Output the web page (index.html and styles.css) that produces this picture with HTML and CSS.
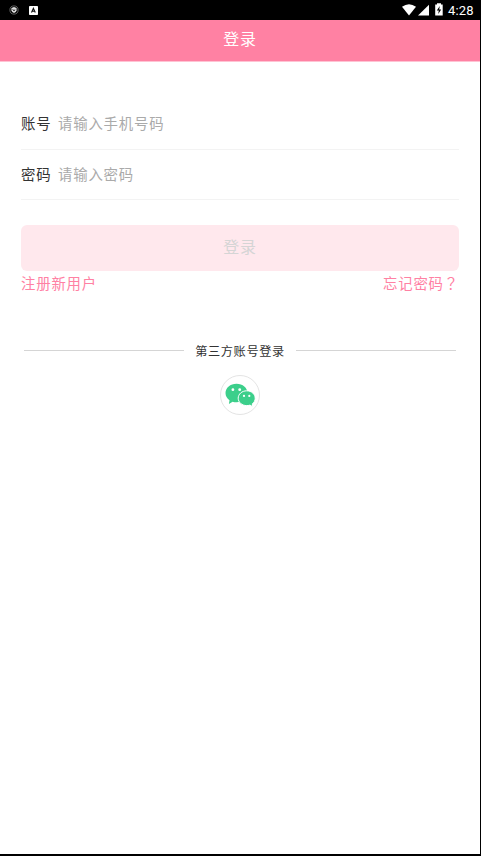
FILE: index.html
```html
<!DOCTYPE html>
<html lang="zh-CN">
<head>
<meta charset="utf-8">
<title>登录</title>
<link rel="stylesheet" href="styles.css">
</head>
<body>
<div class="screen">
  <div class="status">
    <svg class="shield" viewBox="0 0 10 10"><circle cx="5" cy="5" r="4.1" fill="none" stroke="#777" stroke-width=".8"/><path d="M2.4 3 5 2.1 7.6 3v2.4Q7.2 7.2 5 8 2.8 7.2 2.4 5.4z" fill="#ddd"/><path d="M3.7 4.2 5 6l.9-1.5" fill="none" stroke="#222" stroke-width=".9"/></svg>
    <svg class="app" viewBox="0 0 9 9"><rect width="9" height="9" rx=".8" fill="#fff"/><path d="M2.5 6.6 4.4 2.4 6.3 6.6M3.2 5.3h2.4" fill="none" stroke="#111" stroke-width="1.1"/></svg>
    <svg class="signals" viewBox="0 0 42 14"><path d="M0 3.8Q7-1.2 14 3.8L7 12.5z" fill="#fff"/><path d="M27 1.7v10.8H16z" fill="#fff"/><path d="M35 .3h4v1.3h1.700v11H33.200v-11H35z" fill="#fff"/><path d="M37.800 3 34.800 7.500h2L36.200 11l3-4.500h-2z" fill="#000"/></svg>
    <span class="clock">4:28</span>
  </div>
  <header class="title">登录</header>
  <main>
    <label class="field"><span class="name">账号</span><span class="hint">请输入手机号码</span></label>
    <label class="field"><span class="name">密码</span><span class="hint">请输入密码</span></label>
    <div class="submit">登录</div>
    <div class="links"><a>注册新用户</a><a>忘记密码<span class="mark" lang="zh-TW">？</span></a></div>
    <div class="other"><span>第三方账号登录</span></div>
    <div class="wechat">
      <svg viewBox="0 0 40 40"><path d="M16.500 8.700c-6.200 0-11 4.200-11 9.300 0 3 1.500 5.500 4 7.200l-.6 3.700 3.700-2.200c1.200.4 2.500.6 3.900.6 6.200 0 11-4.200 11-9.300s-4.800-9.300-11-9.300z" fill="#3ccf8b"/><path d="M26.700 15.800c-4.700 0-8.500 3.300-8.500 7.400s3.800 7.400 8.500 7.400c1.200 0 2.300-.2 3.300-.5l2.700 1.600-.4-2.900c1.800-1.300 2.900-3.300 2.900-5.600 0-4.100-3.800-7.400-8.500-7.400z" fill="#3ccf8b" stroke="#fff" stroke-width="1"/><g fill="#fff"><circle cx="12.900" cy="14.700" r="1.400"/><circle cx="19.700" cy="14.700" r="1.400"/><circle cx="24" cy="20.900" r="1.100"/><circle cx="29.300" cy="20.900" r="1.100"/></g></svg>
    </div>
  </main>
</div>
</body>
</html>
```
FILE: styles.css
```css
* { box-sizing: border-box; }
body {
  margin: 0;
  background: #000;
  font-family: "Noto Sans CJK SC", sans-serif;
  font-size: 14.400px;
  letter-spacing: .8px;
  color: #333;
}
.screen { width: 480px; height: 854px; background: #fff; overflow: hidden; }
.status { height: 20px; background: #000; display: flex; align-items: center; padding: 0 7px 0 9px; }
.shield { width: 10px; height: 10px; }
.app { width: 9px; height: 9px; margin-left: 10px; }
.signals { width: 42px; height: 14px; margin-left: auto; margin-top: -1px; }
.clock { width: 26px; margin-left: 4px; margin-right: -1px; padding-top: 1px; color: #fff; font: 400 13px/19px Roboto, sans-serif; letter-spacing: .2px; }
.title {
  height: 42px;
  background: #ff81a3;
  border-bottom: 1px solid #ffc3d3;
  color: #fff;
  font-size: 16px;
  line-height: 37px;
  text-align: center;
}
main { padding: 37px 21px 0; }
.field { display: flex; height: 51px; line-height: 48px; border-bottom: 1px solid #f3f3f3; }
.field + .field { height: 50px; }
.name { width: 37px; }
.hint { color: #aaa; }
.submit {
  height: 45.500px;
  margin-top: 25px;
  border-radius: 6px;
  background: #ffe8ed;
  color: #d5d5d5;
  font-size: 16px;
  line-height: 43px;
  text-align: center;
}
.links { display: flex; justify-content: space-between; height: 24.500px; line-height: 23px; color: #ff81a3; }
.mark { font-family: "Noto Sans CJK TC", sans-serif; }
.other { display: flex; align-items: center; gap: 11px; height: 20px; margin: 45px 3px 0; font-size: 12.200px; letter-spacing: .6px; }
.other span { padding-top: 2px; }
.other::before, .other::after { content: ""; flex: 1; height: 1px; background: #d5d5d5; }
.wechat { width: 40px; height: 40px; margin: 15px auto 0; border: 1px solid #e4e4e4; border-radius: 50%; }
.wechat svg { display: block; width: 40px; height: 40px; margin: -1px; }
```
